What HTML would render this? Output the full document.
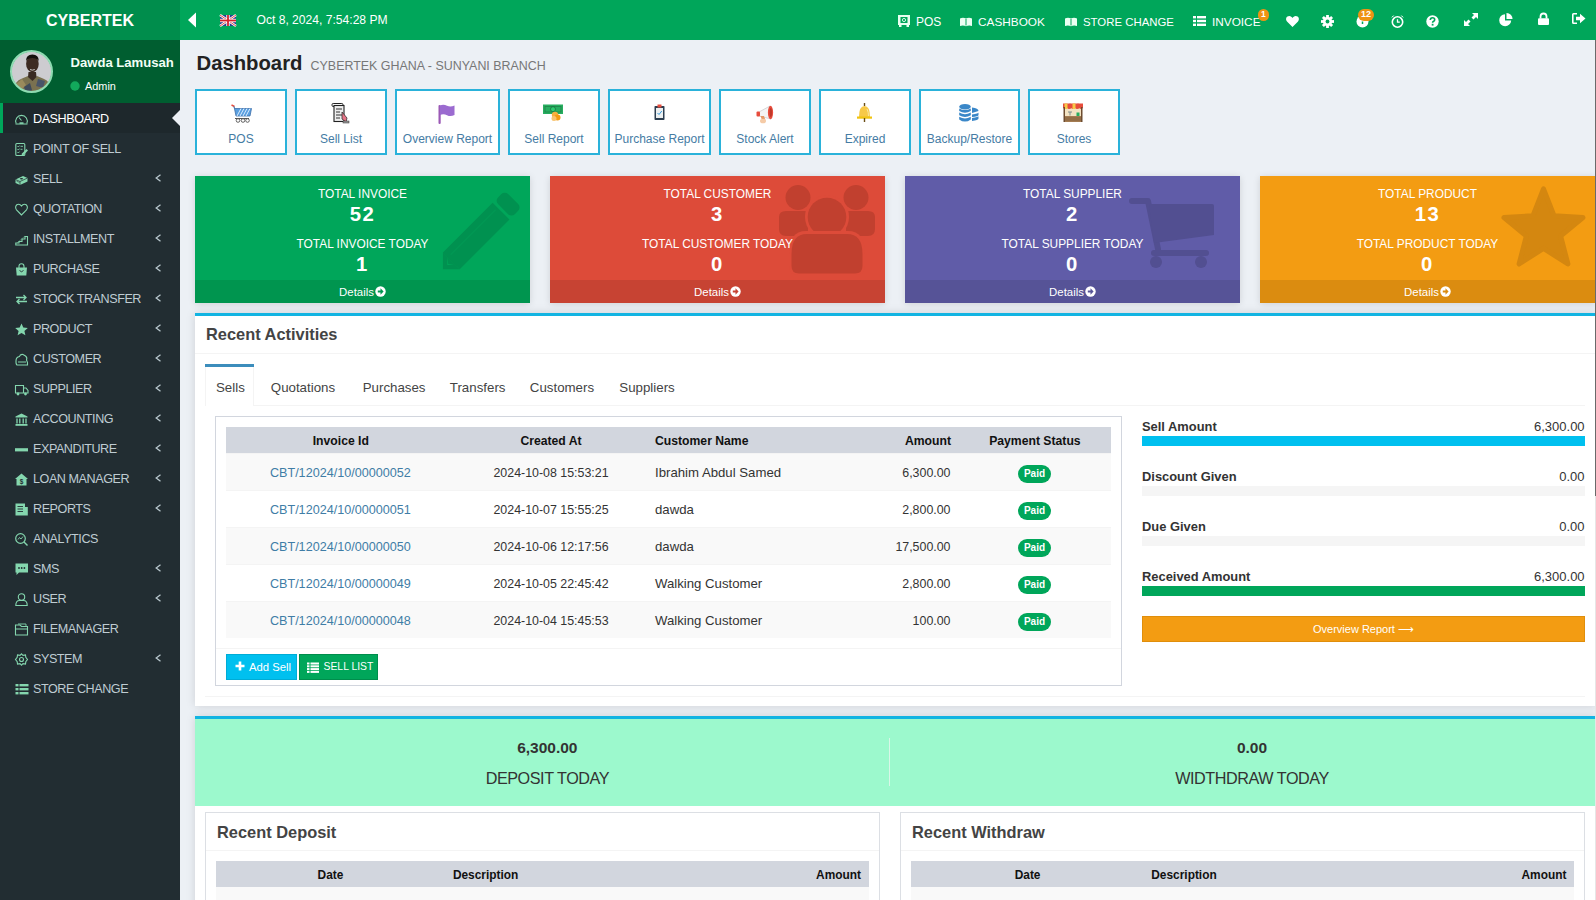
<!DOCTYPE html>
<html><head><meta charset="utf-8"><title>Dashboard</title>
<style>
html,body{margin:0;padding:0;}
body{width:1596px;height:900px;overflow:hidden;position:relative;background:#ecf0f5;font-family:"Liberation Sans", sans-serif;}
.t{position:absolute;white-space:nowrap;}
.r{position:absolute;box-sizing:border-box;}
.s{position:absolute;overflow:visible;}
</style></head><body>
<div class="r" style="left:0px;top:0px;width:1596px;height:40px;background:#00a65a;"></div>
<div class="r" style="left:0px;top:0px;width:180px;height:40px;background:#008d4c;"></div>
<div class="t" style="top:12.96px;font-size:16px;line-height:16px;color:#fff;font-weight:bold;left:-410px;width:1000px;text-align:center;">CYBERTEK</div>
<svg class="s" style="left:187px;top:12px" width="10" height="16" viewBox="0 0 10 16"><polygon points="9,0.5 1,8 9,15.5" fill="#fff"/></svg>
<svg class="s" style="left:220px;top:15px" width="16" height="11" viewBox="0 0 16 11"><rect width="16" height="11" fill="#2a3d8f"/><path d="M0 0L16 11M16 0L0 11" stroke="#fff" stroke-width="2.4"/><path d="M0 0L16 11M16 0L0 11" stroke="#d33" stroke-width="0.9"/><rect x="6.3" width="3.4" height="11" fill="#fff"/><rect y="3.8" width="16" height="3.4" fill="#fff"/><rect x="7.1" width="1.8" height="11" fill="#d4202c"/><rect y="4.6" width="16" height="1.8" fill="#d4202c"/></svg>
<div class="t" style="top:14.26px;font-size:12.1px;line-height:12.1px;color:#fff;left:256.5px;">Oct 8, 2024, 7:54:28 PM</div>
<svg class="s" style="left:898px;top:15px" width="12" height="12" viewBox="0 0 12 12"><rect x="0" y="0" width="12" height="10" fill="#e8fff0"/><rect x="2.5" y="2" width="7" height="6" fill="#00a65a"/><circle cx="6" cy="5" r="1.6" fill="none" stroke="#e8fff0" stroke-width="0.9"/><rect x="1" y="10" width="2.5" height="2" fill="#e8fff0"/><rect x="8.5" y="10" width="2.5" height="2" fill="#e8fff0"/></svg>
<div class="t" style="top:16.34px;font-size:12px;line-height:12px;color:#fff;left:916px;">POS</div>
<svg class="s" style="left:960px;top:16.5px" width="12" height="10" viewBox="0 0 12 10"><path d="M0 1.5 Q3 0 6 1.5 Q9 0 12 1.5 L12 9 Q9 7.8 6 9.2 Q3 7.8 0 9Z" fill="#eafff2"/><rect x="5.5" y="2" width="1" height="6.5" fill="#00a65a"/></svg>
<div class="t" style="top:16.51px;font-size:11.8px;line-height:11.8px;color:#fff;left:978px;">CASHBOOK</div>
<svg class="s" style="left:1065px;top:16.5px" width="12" height="10" viewBox="0 0 12 10"><path d="M0 1.5 Q3 0 6 1.5 Q9 0 12 1.5 L12 9 Q9 7.8 6 9.2 Q3 7.8 0 9Z" fill="#eafff2"/><rect x="5.5" y="2" width="1" height="6.5" fill="#00a65a"/></svg>
<div class="t" style="top:16.85px;font-size:11.4px;line-height:11.4px;color:#fff;left:1083px;">STORE CHANGE</div>
<svg class="s" style="left:1193px;top:15px" width="13" height="12" viewBox="0 0 13 12"><rect x="0" y="1" width="3" height="2.4" fill="#fff"/><rect x="4" y="1" width="9" height="2.4" fill="#fff"/><rect x="0" y="4.8" width="3" height="2.4" fill="#fff"/><rect x="4" y="4.8" width="9" height="2.4" fill="#fff"/><rect x="0" y="8.6" width="3" height="2.4" fill="#fff"/><rect x="4" y="8.6" width="9" height="2.4" fill="#fff"/></svg>
<div class="t" style="top:16.51px;font-size:11.8px;line-height:11.8px;color:#fff;left:1212px;">INVOICE</div>
<div class="r" style="left:1257.5px;top:9px;width:11.5px;height:11.5px;border-radius:6px;background:#ee9314;color:#fff;font-size:8.5px;font-weight:bold;text-align:center;line-height:11.5px;">1</div>
<svg class="s" style="left:1285.5px;top:15.5px" width="13" height="11" viewBox="0 0 13 11"><path d="M6.5 11 L1 5.5 C-1 3 0.5 0 3.3 0 C4.8 0 5.8 1 6.5 2 C7.2 1 8.2 0 9.7 0 C12.5 0 14 3 12 5.5Z" fill="#fff"/></svg>
<svg class="s" style="left:1320.5px;top:14.5px" width="13" height="13" viewBox="0 0 13 13"><g transform="translate(6.5,6.5)"><circle r="4.6" fill="#fff"/><rect x="-1.4" y="-6.5" width="2.8" height="3" fill="#fff" transform="rotate(0)"/><rect x="-1.4" y="-6.5" width="2.8" height="3" fill="#fff" transform="rotate(45)"/><rect x="-1.4" y="-6.5" width="2.8" height="3" fill="#fff" transform="rotate(90)"/><rect x="-1.4" y="-6.5" width="2.8" height="3" fill="#fff" transform="rotate(135)"/><rect x="-1.4" y="-6.5" width="2.8" height="3" fill="#fff" transform="rotate(180)"/><rect x="-1.4" y="-6.5" width="2.8" height="3" fill="#fff" transform="rotate(225)"/><rect x="-1.4" y="-6.5" width="2.8" height="3" fill="#fff" transform="rotate(270)"/><rect x="-1.4" y="-6.5" width="2.8" height="3" fill="#fff" transform="rotate(315)"/><circle r="1.9" fill="#00a65a"/></g></svg>
<svg class="s" style="left:1355.5px;top:15px" width="13" height="13" viewBox="0 0 13 13"><circle cx="6.5" cy="6.5" r="6" fill="#fff"/><path d="M6.5 6.5 L6.5 9 M6.5 6.5" stroke="#00a65a" stroke-width="1.5"/></svg>
<div class="r" style="left:1358px;top:9px;width:16px;height:11.5px;border-radius:6px;background:#ee9314;color:#fff;font-size:9px;font-weight:bold;text-align:center;line-height:11.5px;">12</div>
<svg class="s" style="left:1391px;top:14.5px" width="13" height="13" viewBox="0 0 13 13"><circle cx="6.5" cy="7" r="5.2" fill="none" stroke="#fff" stroke-width="1.6"/><path d="M6.5 4.2V7.2H8.8" stroke="#fff" stroke-width="1.3" fill="none"/><path d="M0.3 3 Q1 0 3.5 0.5Z M12.7 3 Q12 0 9.5 0.5Z" fill="#fff"/></svg>
<svg class="s" style="left:1425.5px;top:14.5px" width="13" height="13" viewBox="0 0 13 13"><circle cx="6.5" cy="6.5" r="6.2" fill="#fff"/><path d="M4.3 5 Q4.3 2.7 6.5 2.7 Q8.7 2.7 8.7 4.7 Q8.7 5.9 7.3 6.5 Q6.6 6.9 6.6 7.8" stroke="#00a65a" stroke-width="1.6" fill="none"/><rect x="5.7" y="8.8" width="1.8" height="1.8" fill="#00a65a"/></svg>
<svg class="s" style="left:1463.5px;top:12.5px" width="14" height="13" viewBox="0 0 14 13"><path d="M8 0H14V6L12 4L9.5 6.5L7.5 4.5L10 2Z M6 13H0V7L2 9L4.5 6.5L6.5 8.5L4 11Z" fill="#fff"/></svg>
<svg class="s" style="left:1499px;top:12.5px" width="14" height="13" viewBox="0 0 14 13"><path d="M6 1.2 A6 6 0 1 0 12.2 7.5 L6 7.5Z" fill="#fff"/><path d="M7.5 0 A6 6 0 0 1 13.6 6 L7.5 6Z" fill="#fff"/></svg>
<svg class="s" style="left:1537.5px;top:12.5px" width="11" height="12" viewBox="0 0 11 12"><path d="M2.5 5.5V3.5 Q2.5 0.5 5.5 0.5 Q8.5 0.5 8.5 3.5V5.5" fill="none" stroke="#fff" stroke-width="1.8"/><rect x="0" y="5.2" width="11" height="6.8" rx="1" fill="#fff"/></svg>
<svg class="s" style="left:1571.5px;top:13px" width="14" height="11" viewBox="0 0 14 11"><path d="M5 0.8H1.5 Q0.8 0.8 0.8 1.5V9.5 Q0.8 10.2 1.5 10.2H5" fill="none" stroke="#fff" stroke-width="1.6"/><path d="M4 3.8H8V0.8L13.5 5.5L8 10.2V7.2H4Z" fill="#fff"/></svg>
<div class="r" style="left:0px;top:40px;width:180px;height:860px;background:#222d32;"></div>
<div class="r" style="left:0px;top:40px;width:180px;height:63px;background:#005e30;"></div>
<svg class="s" style="left:10px;top:50px" width="43" height="43" viewBox="0 0 43 43"><defs><clipPath id="av"><circle cx="21.5" cy="21.5" r="20"/></clipPath></defs>
<g clip-path="url(#av)">
<rect x="0" y="0" width="43" height="43" fill="#cdccd0"/>
<path d="M3 43 Q4 31 12 28.5 L18 26 L22 30 L27 26 L33 28.5 Q41 31 42 43Z" fill="#7a7150"/>
<path d="M6 34 L12 29 L16 35 L10 41Z" fill="#9a8a5c"/><path d="M28 29 L35 31 L33 38 L26 36Z" fill="#485468"/>
<path d="M14 37 L20 33 L22 40 L16 43Z" fill="#3f4a5a"/><path d="M30 38 L37 36 L39 43 L31 43Z" fill="#a59060"/>
<path d="M18.5 22 L18 27 L22.5 31 L26.5 27 L26 22Z" fill="#3a2a22"/>
<ellipse cx="22.4" cy="14" rx="6.3" ry="8.3" fill="#3d2b22"/>
<path d="M16 11 Q16 4.5 22.4 4.5 Q28.8 4.5 28.8 11 Q27 8 22.4 8 Q17.8 8 16 11Z" fill="#140f0c"/>
<path d="M20 19.5 Q22.4 20.8 24.8 19.5" stroke="#eee" stroke-width="0.8" fill="none"/>
</g>
<circle cx="21.5" cy="21.5" r="20.5" fill="none" stroke="#8fdcb2" stroke-width="2"/></svg>
<div class="t" style="top:56.41px;font-size:13.1px;line-height:13.1px;color:#f2fff6;font-weight:bold;left:70.5px;">Dawda Lamusah</div>
<svg class="s" style="left:70px;top:81px" width="10" height="10" viewBox="0 0 10 10"><circle cx="5" cy="5" r="4.7" fill="#12a95b"/></svg>
<div class="t" style="top:80.87px;font-size:10.9px;line-height:10.9px;color:#fff;left:85px;">Admin</div>
<div class="r" style="left:0px;top:103px;width:180px;height:30px;background:#1e282c;"></div>
<div class="r" style="left:0px;top:103px;width:3px;height:30px;background:#00a65a;"></div>
<svg class="s" style="left:172px;top:110px" width="8" height="16" viewBox="0 0 8 16"><polygon points="8,0 0,8 8,16" fill="#ecf0f5"/></svg>
<div class="t" style="top:113.03px;font-size:12.6px;line-height:12.6px;color:#fff;letter-spacing:-0.45px;left:33px;">DASHBOARD</div>
<svg class="s" style="left:14.5px;top:113px" width="13" height="13" viewBox="0 0 13 13"><path d="M1.2 10.5 A5.8 5.8 0 1 1 11.8 10.5" fill="none" stroke="#84d6ae" stroke-width="1.1"/><path d="M6.5 7.5 L4 4.5" stroke="#84d6ae" stroke-width="1.1"/><rect x="4.5" y="9.3" width="4" height="1.6" fill="#84d6ae"/><path d="M0.5 11H12.5" stroke="#84d6ae" stroke-width="1"/></svg>
<div class="t" style="top:143.03px;font-size:12.6px;line-height:12.6px;color:#bfccd2;letter-spacing:-0.45px;left:33px;">POINT OF SELL</div>
<svg class="s" style="left:14.5px;top:143px" width="13" height="13" viewBox="0 0 13 13"><rect x="0.8" y="0.5" width="9" height="12" rx="1" fill="none" stroke="#84d6ae" stroke-width="1.1"/><path d="M2.5 3.2 L3.3 4 L4.5 2.6 M5.5 3.3H8 M2.5 6.2 L3.3 7 L4.5 5.6 M5.5 6.3H7.5 M2.5 9.2 L3.3 10 L4.5 8.6" stroke="#84d6ae" stroke-width="0.9" fill="none"/><path d="M6.5 12.5 L7 10.5 L11.5 6 L13 7.5 L8.5 12Z" fill="#84d6ae"/><path d="" stroke="#84d6ae"/></svg>
<div class="t" style="top:173.03px;font-size:12.6px;line-height:12.6px;color:#bfccd2;letter-spacing:-0.45px;left:33px;">SELL</div>
<svg class="s" style="left:14.5px;top:173px" width="13" height="13" viewBox="0 0 13 13"><path d="M0.5 6.5 L8 3 L12.5 5 L12.5 8.5 L5 12 L0.5 10Z" fill="#84d6ae"/><path d="M0.5 6.5 L5 8.5 L12.5 5 M5 8.5 V12" stroke="#222d32" stroke-width="0.7" fill="none"/><ellipse cx="6.5" cy="5.8" rx="1.6" ry="0.8" fill="#222d32"/><path d="M1.5 8 L4.5 9.5" stroke="#222d32" stroke-width="0.5"/><path d="" stroke="#84d6ae"/><path d="" fill="#84d6ae"/><path d="" fill="#84d6ae"/></svg>
<svg class="s" style="left:154.5px;top:174px" width="6.5" height="8" viewBox="0 0 6.5 8"><path d="M5.5 0.8 L1.2 4 L5.5 7.2" fill="none" stroke="#b8c7ce" stroke-width="1.3"/></svg>
<div class="t" style="top:203.03px;font-size:12.6px;line-height:12.6px;color:#bfccd2;letter-spacing:-0.45px;left:33px;">QUOTATION</div>
<svg class="s" style="left:14.5px;top:203px" width="13" height="13" viewBox="0 0 13 13"><path d="M6.5 12 L1.5 6.8 C-0.3 4.8 0.7 1.2 3.5 1.2 C5 1.2 6 2.2 6.5 3 C7 2.2 8 1.2 9.5 1.2 C12.3 1.2 13.3 4.8 11.5 6.8Z" fill="none" stroke="#84d6ae" stroke-width="1.1"/><path d="" fill="#84d6ae"/><path d="" fill="#84d6ae"/><path d="" fill="#84d6ae"/></svg>
<svg class="s" style="left:154.5px;top:204px" width="6.5" height="8" viewBox="0 0 6.5 8"><path d="M5.5 0.8 L1.2 4 L5.5 7.2" fill="none" stroke="#b8c7ce" stroke-width="1.3"/></svg>
<div class="t" style="top:233.03px;font-size:12.6px;line-height:12.6px;color:#bfccd2;letter-spacing:-0.45px;left:33px;">INSTALLMENT</div>
<svg class="s" style="left:14.5px;top:233px" width="13" height="13" viewBox="0 0 13 13"><path d="M0.8 12 H12.5 V3.5 H10 V6 H7 V8.5 H4 V10 H0.8Z" fill="none" stroke="#84d6ae" stroke-width="1.1"/><path d="M2 10 L10 3" stroke="#84d6ae" stroke-width="0.7" opacity="0.6"/><path d="" fill="#84d6ae"/><path d="" fill="#84d6ae"/></svg>
<svg class="s" style="left:154.5px;top:234px" width="6.5" height="8" viewBox="0 0 6.5 8"><path d="M5.5 0.8 L1.2 4 L5.5 7.2" fill="none" stroke="#b8c7ce" stroke-width="1.3"/></svg>
<div class="t" style="top:263.03px;font-size:12.6px;line-height:12.6px;color:#bfccd2;letter-spacing:-0.45px;left:33px;">PURCHASE</div>
<svg class="s" style="left:14.5px;top:263px" width="13" height="13" viewBox="0 0 13 13"><path d="M1 4.5 H12 L11.3 12.5 H1.7Z" fill="#84d6ae"/><path d="M4 5 V3.5 Q4 0.8 6.5 0.8 Q9 0.8 9 3.5 V5" fill="none" stroke="#84d6ae" stroke-width="1.1"/><path d="M4.5 7.5 Q6.5 10 8.5 7.5" stroke="#222d32" fill="none" stroke-width="0.9"/><path d="" fill="#84d6ae"/><path d="" fill="#84d6ae"/></svg>
<svg class="s" style="left:154.5px;top:264px" width="6.5" height="8" viewBox="0 0 6.5 8"><path d="M5.5 0.8 L1.2 4 L5.5 7.2" fill="none" stroke="#b8c7ce" stroke-width="1.3"/></svg>
<div class="t" style="top:293.03px;font-size:12.6px;line-height:12.6px;color:#bfccd2;letter-spacing:-0.45px;left:33px;">STOCK TRANSFER</div>
<svg class="s" style="left:14.5px;top:293px" width="13" height="13" viewBox="0 0 13 13"><path d="M1 4.5 H11 M8.5 2 L11 4.5 L8.5 7 M12 8.5 H2 M4.5 6 L2 8.5 L4.5 11" fill="none" stroke="#84d6ae" stroke-width="1.3"/><path d="" fill="#84d6ae"/><path d="" fill="#84d6ae"/><path d="" fill="#84d6ae"/></svg>
<svg class="s" style="left:154.5px;top:294px" width="6.5" height="8" viewBox="0 0 6.5 8"><path d="M5.5 0.8 L1.2 4 L5.5 7.2" fill="none" stroke="#b8c7ce" stroke-width="1.3"/></svg>
<div class="t" style="top:323.03px;font-size:12.6px;line-height:12.6px;color:#bfccd2;letter-spacing:-0.45px;left:33px;">PRODUCT</div>
<svg class="s" style="left:14.5px;top:323px" width="13" height="13" viewBox="0 0 13 13"><polygon points="6.5,0.5 8.3,4.6 12.8,4.9 9.4,7.9 10.4,12.3 6.5,10 2.6,12.3 3.6,7.9 0.2,4.9 4.7,4.6" fill="#84d6ae"/><path d="" fill="#84d6ae"/><path d="" fill="#84d6ae"/><path d="" fill="#84d6ae"/></svg>
<svg class="s" style="left:154.5px;top:324px" width="6.5" height="8" viewBox="0 0 6.5 8"><path d="M5.5 0.8 L1.2 4 L5.5 7.2" fill="none" stroke="#b8c7ce" stroke-width="1.3"/></svg>
<div class="t" style="top:353.03px;font-size:12.6px;line-height:12.6px;color:#bfccd2;letter-spacing:-0.45px;left:33px;">CUSTOMER</div>
<svg class="s" style="left:14.5px;top:353px" width="13" height="13" viewBox="0 0 13 13"><path d="M1 8 Q1 4 4.5 3.5 Q5 1 8 1.5 L10.5 3 Q12.5 4.5 11.5 7 L12.5 9.5 V12 H2 Q0.8 11.5 1 8Z" fill="none" stroke="#84d6ae" stroke-width="1.1"/><path d="M3 9H11" stroke="#84d6ae" stroke-width="1"/><path d="" fill="#84d6ae"/><path d="" fill="#84d6ae"/></svg>
<svg class="s" style="left:154.5px;top:354px" width="6.5" height="8" viewBox="0 0 6.5 8"><path d="M5.5 0.8 L1.2 4 L5.5 7.2" fill="none" stroke="#b8c7ce" stroke-width="1.3"/></svg>
<div class="t" style="top:383.03px;font-size:12.6px;line-height:12.6px;color:#bfccd2;letter-spacing:-0.45px;left:33px;">SUPPLIER</div>
<svg class="s" style="left:14.5px;top:383px" width="13" height="13" viewBox="0 0 13 13"><path d="M0.5 2.5 H8.5 V10 H0.5Z M8.5 5 H11 L13 7.5 V10 H8.5" fill="none" stroke="#84d6ae" stroke-width="1.1"/><circle cx="3" cy="11" r="1.4" fill="#84d6ae"/><circle cx="10.5" cy="11" r="1.4" fill="#84d6ae"/><path d="" fill="#84d6ae"/></svg>
<svg class="s" style="left:154.5px;top:384px" width="6.5" height="8" viewBox="0 0 6.5 8"><path d="M5.5 0.8 L1.2 4 L5.5 7.2" fill="none" stroke="#b8c7ce" stroke-width="1.3"/></svg>
<div class="t" style="top:413.03px;font-size:12.6px;line-height:12.6px;color:#bfccd2;letter-spacing:-0.45px;left:33px;">ACCOUNTING</div>
<svg class="s" style="left:14.5px;top:413px" width="13" height="13" viewBox="0 0 13 13"><path d="M6.5 0.5 L12.5 3.5 V4.5 H0.5 V3.5Z" fill="#84d6ae"/><path d="M2 5.5V10.5M4.8 5.5V10.5M8.2 5.5V10.5M11 5.5V10.5" stroke="#84d6ae" stroke-width="1.3"/><rect x="0.5" y="11" width="12" height="1.8" fill="#84d6ae"/><path d="" fill="#84d6ae"/></svg>
<svg class="s" style="left:154.5px;top:414px" width="6.5" height="8" viewBox="0 0 6.5 8"><path d="M5.5 0.8 L1.2 4 L5.5 7.2" fill="none" stroke="#b8c7ce" stroke-width="1.3"/></svg>
<div class="t" style="top:443.03px;font-size:12.6px;line-height:12.6px;color:#bfccd2;letter-spacing:-0.45px;left:33px;">EXPANDITURE</div>
<svg class="s" style="left:14.5px;top:443px" width="13" height="13" viewBox="0 0 13 13"><rect x="0" y="5.2" width="13" height="3.2" fill="#84d6ae"/><path d="" fill="#84d6ae"/><path d="" fill="#84d6ae"/><path d="" fill="#84d6ae"/></svg>
<svg class="s" style="left:154.5px;top:444px" width="6.5" height="8" viewBox="0 0 6.5 8"><path d="M5.5 0.8 L1.2 4 L5.5 7.2" fill="none" stroke="#b8c7ce" stroke-width="1.3"/></svg>
<div class="t" style="top:473.03px;font-size:12.6px;line-height:12.6px;color:#bfccd2;letter-spacing:-0.45px;left:33px;">LOAN MANAGER</div>
<svg class="s" style="left:14.5px;top:473px" width="13" height="13" viewBox="0 0 13 13"><path d="M6.5 0.5 L13 6 H11.5 V12.5 H1.5 V6 H0Z" fill="#84d6ae"/><text x="6.5" y="10.5" font-size="6.5" font-weight="bold" text-anchor="middle" fill="#222d32" font-family="Liberation Sans">$</text><path d="" fill="#84d6ae"/><path d="" fill="#84d6ae"/><path d="" fill="#84d6ae"/></svg>
<svg class="s" style="left:154.5px;top:474px" width="6.5" height="8" viewBox="0 0 6.5 8"><path d="M5.5 0.8 L1.2 4 L5.5 7.2" fill="none" stroke="#b8c7ce" stroke-width="1.3"/></svg>
<div class="t" style="top:503.03px;font-size:12.6px;line-height:12.6px;color:#bfccd2;letter-spacing:-0.45px;left:33px;">REPORTS</div>
<svg class="s" style="left:14.5px;top:503px" width="13" height="13" viewBox="0 0 13 13"><rect x="0.5" y="0.5" width="9.5" height="12" fill="#84d6ae"/><rect x="10" y="4" width="2.8" height="8.5" fill="#84d6ae"/><path d="M2.5 3.5H8M2.5 6H8M2.5 8.5H8" stroke="#222d32" stroke-width="0.9"/><path d="" fill="#84d6ae"/><path d="" fill="#84d6ae"/></svg>
<svg class="s" style="left:154.5px;top:504px" width="6.5" height="8" viewBox="0 0 6.5 8"><path d="M5.5 0.8 L1.2 4 L5.5 7.2" fill="none" stroke="#b8c7ce" stroke-width="1.3"/></svg>
<div class="t" style="top:533.03px;font-size:12.6px;line-height:12.6px;color:#bfccd2;letter-spacing:-0.45px;left:33px;">ANALYTICS</div>
<svg class="s" style="left:14.5px;top:533px" width="13" height="13" viewBox="0 0 13 13"><circle cx="5.5" cy="5.5" r="4.8" fill="none" stroke="#84d6ae" stroke-width="1.2"/><path d="M9 9 L12.5 12.5" stroke="#84d6ae" stroke-width="1.4"/><path d="M3 6.5 L4.5 4.5 L6 6 L8 3.5" stroke="#84d6ae" fill="none" stroke-width="0.9"/><path d="" fill="#84d6ae"/></svg>
<div class="t" style="top:563.03px;font-size:12.6px;line-height:12.6px;color:#bfccd2;letter-spacing:-0.45px;left:33px;">SMS</div>
<svg class="s" style="left:14.5px;top:563px" width="13" height="13" viewBox="0 0 13 13"><path d="M0.5 0.5 H13 V9.5 H4 L1.5 12 V9.5 H0.5Z" fill="#84d6ae"/><circle cx="4" cy="5" r="0.9" fill="#222d32"/><circle cx="6.7" cy="5" r="0.9" fill="#222d32"/><circle cx="9.4" cy="5" r="0.9" fill="#222d32"/><path d="" fill="#84d6ae"/><path d="" fill="#84d6ae"/><path d="" fill="#84d6ae"/></svg>
<svg class="s" style="left:154.5px;top:564px" width="6.5" height="8" viewBox="0 0 6.5 8"><path d="M5.5 0.8 L1.2 4 L5.5 7.2" fill="none" stroke="#b8c7ce" stroke-width="1.3"/></svg>
<div class="t" style="top:593.03px;font-size:12.6px;line-height:12.6px;color:#bfccd2;letter-spacing:-0.45px;left:33px;">USER</div>
<svg class="s" style="left:14.5px;top:593px" width="13" height="13" viewBox="0 0 13 13"><circle cx="6.5" cy="4" r="3.2" fill="none" stroke="#84d6ae" stroke-width="1.1"/><path d="M0.8 12.5 Q0.8 7.5 4.5 7.5 H8.5 Q12.2 7.5 12.2 12.5Z" fill="none" stroke="#84d6ae" stroke-width="1.1"/><path d="" fill="#84d6ae"/><path d="" fill="#84d6ae"/></svg>
<svg class="s" style="left:154.5px;top:594px" width="6.5" height="8" viewBox="0 0 6.5 8"><path d="M5.5 0.8 L1.2 4 L5.5 7.2" fill="none" stroke="#b8c7ce" stroke-width="1.3"/></svg>
<div class="t" style="top:623.03px;font-size:12.6px;line-height:12.6px;color:#bfccd2;letter-spacing:-0.45px;left:33px;">FILEMANAGER</div>
<svg class="s" style="left:14.5px;top:623px" width="13" height="13" viewBox="0 0 13 13"><path d="M0.5 2 H5 L6.5 3.5 H12.5 V12 H0.5Z" fill="none" stroke="#84d6ae" stroke-width="1.1"/><path d="M0.5 6 H12.5" stroke="#84d6ae" stroke-width="1"/><path d="M3 1 H11 V3" stroke="#84d6ae" fill="none" stroke-width="0.9"/><path d="" fill="#84d6ae"/></svg>
<div class="t" style="top:653.03px;font-size:12.6px;line-height:12.6px;color:#bfccd2;letter-spacing:-0.45px;left:33px;">SYSTEM</div>
<svg class="s" style="left:14.5px;top:653px" width="13" height="13" viewBox="0 0 13 13"><circle cx="6.5" cy="6.5" r="2" fill="none" stroke="#84d6ae" stroke-width="1.1"/><path d="M6.5 0.8 L8 2.3 L10.5 1.9 L10.8 4.3 L12.5 6.5 L10.8 8.7 L10.5 11.1 L8 10.7 L6.5 12.2 L5 10.7 L2.5 11.1 L2.2 8.7 L0.5 6.5 L2.2 4.3 L2.5 1.9 L5 2.3Z" fill="none" stroke="#84d6ae" stroke-width="1.1"/><path d="" fill="#84d6ae"/><path d="" fill="#84d6ae"/></svg>
<svg class="s" style="left:154.5px;top:654px" width="6.5" height="8" viewBox="0 0 6.5 8"><path d="M5.5 0.8 L1.2 4 L5.5 7.2" fill="none" stroke="#b8c7ce" stroke-width="1.3"/></svg>
<div class="t" style="top:683.03px;font-size:12.6px;line-height:12.6px;color:#bfccd2;letter-spacing:-0.45px;left:33px;">STORE CHANGE</div>
<svg class="s" style="left:14.5px;top:683px" width="13" height="13" viewBox="0 0 13 13"><rect x="0.5" y="1" width="3" height="2.4" fill="#84d6ae"/><rect x="4.5" y="1" width="9" height="2.4" fill="#84d6ae"/><rect x="0.5" y="5" width="3" height="2.4" fill="#84d6ae"/><rect x="4.5" y="5" width="9" height="2.4" fill="#84d6ae"/><rect x="0.5" y="9" width="3" height="2.4" fill="#84d6ae"/><rect x="4.5" y="9" width="9" height="2.4" fill="#84d6ae"/></svg>
<div class="t" style="top:53.32px;font-size:20.3px;line-height:20.3px;color:#222;font-weight:bold;left:196.5px;">Dashboard</div>
<div class="t" style="top:59.96px;font-size:12.45px;line-height:12.45px;color:#777;left:310.6px;">CYBERTEK GHANA - SUNYANI BRANCH</div>
<div class="r" style="left:195px;top:89px;width:92px;height:66px;background:#fff;border:2px solid #2ab2da;"></div>
<div class="t" style="top:132.94px;font-size:12px;line-height:12px;color:#457ca4;left:-259.0px;width:1000px;text-align:center;">POS</div>
<div class="r" style="left:295px;top:89px;width:92px;height:66px;background:#fff;border:2px solid #2ab2da;"></div>
<div class="t" style="top:132.94px;font-size:12px;line-height:12px;color:#457ca4;left:-159.0px;width:1000px;text-align:center;">Sell List</div>
<div class="r" style="left:395px;top:89px;width:105px;height:66px;background:#fff;border:2px solid #2ab2da;"></div>
<div class="t" style="top:132.94px;font-size:12px;line-height:12px;color:#457ca4;left:-52.5px;width:1000px;text-align:center;">Overview Report</div>
<div class="r" style="left:508px;top:89px;width:92px;height:66px;background:#fff;border:2px solid #2ab2da;"></div>
<div class="t" style="top:132.94px;font-size:12px;line-height:12px;color:#457ca4;left:54.0px;width:1000px;text-align:center;">Sell Report</div>
<div class="r" style="left:608px;top:89px;width:103px;height:66px;background:#fff;border:2px solid #2ab2da;"></div>
<div class="t" style="top:132.94px;font-size:12px;line-height:12px;color:#457ca4;left:159.5px;width:1000px;text-align:center;">Purchase Report</div>
<div class="r" style="left:719px;top:89px;width:92px;height:66px;background:#fff;border:2px solid #2ab2da;"></div>
<div class="t" style="top:132.94px;font-size:12px;line-height:12px;color:#457ca4;left:265.0px;width:1000px;text-align:center;">Stock Alert</div>
<div class="r" style="left:819px;top:89px;width:92px;height:66px;background:#fff;border:2px solid #2ab2da;"></div>
<div class="t" style="top:132.94px;font-size:12px;line-height:12px;color:#457ca4;left:365.0px;width:1000px;text-align:center;">Expired</div>
<div class="r" style="left:919px;top:89px;width:101px;height:66px;background:#fff;border:2px solid #2ab2da;"></div>
<div class="t" style="top:132.94px;font-size:12px;line-height:12px;color:#457ca4;left:469.5px;width:1000px;text-align:center;">Backup/Restore</div>
<div class="r" style="left:1028px;top:89px;width:92px;height:66px;background:#fff;border:2px solid #2ab2da;"></div>
<div class="t" style="top:132.94px;font-size:12px;line-height:12px;color:#457ca4;left:574.0px;width:1000px;text-align:center;">Stores</div>
<svg class="s" style="left:230.5px;top:104px" width="21" height="19" viewBox="0 0 21 19"><path d="M0.5 1 L3.5 2.5" stroke="#e74c3c" stroke-width="1.5"/><path d="M3 2.5 L5 12 H19 L20.5 4.5 H3.5Z" fill="#5a9fe0" stroke="#3d6fa8" stroke-width="0.8"/><path d="M6 12 L10 4.5 M9 12 L13 4.5 M12 12 L16 4.5 M15 12 L19 4.5" stroke="#d9ecff" stroke-width="1"/><path d="M4 14.5H18" stroke="#555" stroke-width="1"/><circle cx="7" cy="16.5" r="1.8" fill="#fff" stroke="#555" stroke-width="0.9"/><circle cx="12" cy="16.5" r="1.8" fill="#fff" stroke="#555" stroke-width="0.9"/><circle cx="16.5" cy="16.5" r="1.8" fill="#fff" stroke="#555" stroke-width="0.9"/></svg>
<svg class="s" style="left:331px;top:103px" width="20" height="21" viewBox="0 0 20 21"><rect x="1" y="0.5" width="11" height="3" rx="1.2" fill="#fff" stroke="#222" stroke-width="1"/><rect x="3" y="2.5" width="10" height="16" fill="#eee" stroke="#222" stroke-width="1.1"/><path d="M5 6H11M5 9H9M5 12H11M5 15H9" stroke="#333" stroke-width="1"/><path d="M11 9 L16 15 L15 19 L11 16Z" fill="#e57386" stroke="#333" stroke-width="0.8"/><rect x="12" y="18" width="6" height="2" fill="#999" stroke="#333" stroke-width="0.5"/></svg>
<svg class="s" style="left:438px;top:103.5px" width="17" height="20" viewBox="0 0 17 20"><rect x="0.5" y="1" width="2.2" height="19" rx="1" fill="#9b59b6"/><path d="M2 1.5 Q5.5 0 9 1.8 Q12.5 3.5 16.5 1.5 V11 Q12.5 13 9 11.2 Q5.5 9.5 2 11Z" fill="#9b6bd0"/></svg>
<svg class="s" style="left:543px;top:104px" width="21" height="18" viewBox="0 0 21 18"><rect x="0" y="0.5" width="20" height="9.5" fill="#27ae60"/><rect x="2" y="2.5" width="16" height="5.5" fill="none" stroke="#1e8449" stroke-width="0.8"/><circle cx="10" cy="5.2" r="2.5" fill="#2ecc71" stroke="#145a32" stroke-width="0.6"/><circle cx="12" cy="11" r="3.2" fill="#f5b041"/><circle cx="14.5" cy="13.5" r="3" fill="#f39c12"/><circle cx="11" cy="14.5" r="2.5" fill="#f8c471"/></svg>
<svg class="s" style="left:654px;top:104px" width="11" height="17" viewBox="0 0 11 17"><rect x="0.5" y="2" width="10" height="14" rx="0.8" fill="#2c3e50"/><rect x="2" y="4" width="7" height="10" fill="#ecf0f1"/><rect x="3.5" y="0.5" width="4" height="3" fill="#e74c3c"/><path d="M3.5 9 L5 10.5 L7.8 7" stroke="#3498db" stroke-width="1" fill="none"/></svg>
<svg class="s" style="left:756px;top:104px" width="19" height="20" viewBox="0 0 19 20"><path d="M3 8 L14 2 L15 15 L3 12Z" fill="#f4f4f4" stroke="#c8c8c8" stroke-width="0.7"/><ellipse cx="14.5" cy="8.5" rx="2.6" ry="6.8" fill="#e74c3c"/><ellipse cx="14.8" cy="8.5" rx="1.2" ry="4.5" fill="#c0392b"/><rect x="0.5" y="7.5" width="3.5" height="5" rx="1" fill="#e74c3c"/><path d="M4.5 12 L6.5 17.5 L9.5 16.5 L8 12Z" fill="#e59866"/><ellipse cx="7" cy="17" rx="3" ry="2.3" fill="#f5cba7"/></svg>
<svg class="s" style="left:856px;top:103px" width="17" height="20" viewBox="0 0 17 20"><rect x="7.8" y="0" width="1.4" height="3" fill="#6b4e16"/><path d="M3 14 Q3 3 8.5 3 Q14 3 14 14Z" fill="#f7c948"/><rect x="1" y="13.5" width="15" height="2.2" fill="#f1c40f"/><rect x="7.8" y="15" width="1.4" height="4" fill="#6b4e16"/><path d="M11 6 Q12.5 9 12.5 13" stroke="#f9e79f" stroke-width="1" fill="none"/></svg>
<svg class="s" style="left:959px;top:104px" width="20" height="20" viewBox="0 0 20 20"><ellipse cx="6" cy="2.8" rx="5.8" ry="2.8" fill="#3a87c8"/><path d="M0.2 4.4 Q6 7.8 11.8 4.4 V7 Q6 10.4 0.2 7Z" fill="#3a87c8"/><path d="M0.2 8.6 Q6 12 11.8 8.6 V11.2 Q6 14.6 0.2 11.2Z" fill="#3a87c8"/><path d="M0.2 12.8 Q6 16.2 11.8 12.8 V15.4 Q6 19.8 0.2 15.4Z" fill="#3a87c8"/><path d="M13 3.5 Q19.5 4 19.5 7 L13 9Z M13 10.5 Q19.5 9.5 19.5 8.5 V11 Q19.5 12.5 13 13Z M13 14 Q19.5 13 19.5 12.3 V14.5 Q19.5 16 13 17Z" fill="#3a87c8"/></svg>
<svg class="s" style="left:1063px;top:103px" width="20" height="20" viewBox="0 0 20 20"><rect x="1.5" y="4" width="17" height="15" fill="#f3e3c3"/><rect x="1.5" y="13" width="17" height="6" fill="#a47c52"/><path d="M1.5 15H18.5M1.5 17H18.5" stroke="#7a5634" stroke-width="0.7"/><path d="M0 0.5 H20 V5 Q18 7 16 5 Q14 7 12 5 Q10 7 8 5 Q6 7 4 5 Q2 7 0 5Z" fill="#e74c3c"/><path d="M3 0.5V6 M11 0.5V6" stroke="#f7c948" stroke-width="3"/><path d="M7 0.5V6 M15 0.5V6" stroke="#e74c3c" stroke-width="1"/><rect x="13.5" y="9.5" width="3" height="3.5" fill="#27ae60"/><path d="M5 9 H9 M7 9 V12.5" stroke="#7f8c8d" stroke-width="1"/><rect x="0.5" y="4" width="1.5" height="15" fill="#6d4c30"/><rect x="18" y="4" width="1.5" height="15" fill="#6d4c30"/></svg>
<div class="r" style="left:195px;top:176px;width:335px;height:127px;background:#00a65a;box-shadow:0 1px 7px rgba(0,0,0,0.13);"></div>
<svg class="s" style="left:425px;top:176px" width="110" height="110" viewBox="0 0 110 110"><g transform="translate(53.2,58) rotate(45) scale(0.95)"><rect x="-12.5" y="-52" width="25" height="15" rx="5" fill="#009150"/><rect x="-12.5" y="-34" width="25" height="74" fill="#009150"/><path d="M-12.5 40 H12.5 L0 52.5Z" fill="#009150"/><path d="M-5 -31 V36" stroke="#00a65a" stroke-width="1.6" opacity="0.35"/><path d="M-6 40 L0 46 L5 41 L0 44.5Z" fill="#00a65a"/></g></svg>
<div class="r" style="left:195px;top:280px;width:335px;height:23px;background:#00954f;"></div>
<div class="t" style="top:189.23px;font-size:11.9px;line-height:11.9px;color:#fff;left:-137.5px;width:1000px;text-align:center;">TOTAL INVOICE</div>
<div class="t" style="top:203.92px;font-size:20.3px;line-height:20.3px;color:#fff;font-weight:bold;letter-spacing:1.5px;left:-137.5px;width:1000px;text-align:center;">52</div>
<div class="t" style="top:239.23px;font-size:11.9px;line-height:11.9px;color:#fff;left:-137.5px;width:1000px;text-align:center;">TOTAL INVOICE TODAY</div>
<div class="t" style="top:253.82px;font-size:20.3px;line-height:20.3px;color:#fff;font-weight:bold;letter-spacing:1.5px;left:-137.5px;width:1000px;text-align:center;">1</div>
<div class="t" style="top:286.85px;font-size:11.4px;line-height:11.4px;color:#fff;left:-143.5px;width:1000px;text-align:center;">Details</div>
<svg class="s" style="left:374.5px;top:286px" width="11" height="11" viewBox="0 0 11 11"><circle cx="5.5" cy="5.5" r="5.2" fill="#fff"/><path d="M2.8 4.5 H5.5 V2.3 L8.6 5.5 L5.5 8.7 V6.5 H2.8Z" fill="#00954f"/></svg>
<div class="r" style="left:550px;top:176px;width:335px;height:127px;background:#dd4b39;box-shadow:0 1px 7px rgba(0,0,0,0.13);"></div>
<svg class="s" style="left:778px;top:184px" width="98" height="92" viewBox="0 0 98 92"><circle cx="20" cy="13.5" r="12.5" fill="#c1402f"/><circle cx="78" cy="13.5" r="12.5" fill="#c1402f"/>
<path d="M1 33 Q1 27 8 27 H26 Q30 27 30 31 V52 H8 Q1 52 1 45Z" fill="#c1402f"/><path d="M68 27 H90 Q97 27 97 33 V45 Q97 52 90 52 H68 V31 Q68 27 72 27Z" fill="#c1402f"/>
<circle cx="49" cy="33" r="22" fill="#dd4b39"/><circle cx="49" cy="33" r="19.3" fill="#c1402f"/>
<path d="M11 70 Q11 47 28 47 H70 Q87 47 87 70 V82 Q87 91 78 91 H20 Q11 91 11 82Z" fill="#dd4b39"/><path d="M13.5 70 Q13.5 50 29 50 H69 Q84.5 50 84.5 70 V82 Q84.5 89.5 77 89.5 H21 Q13.5 89.5 13.5 82Z" fill="#c1402f"/></svg>
<div class="r" style="left:550px;top:280px;width:335px;height:23px;background:#c74333;"></div>
<div class="t" style="top:189.23px;font-size:11.9px;line-height:11.9px;color:#fff;left:217.5px;width:1000px;text-align:center;">TOTAL CUSTOMER</div>
<div class="t" style="top:203.92px;font-size:20.3px;line-height:20.3px;color:#fff;font-weight:bold;letter-spacing:1.5px;left:217.5px;width:1000px;text-align:center;">3</div>
<div class="t" style="top:239.23px;font-size:11.9px;line-height:11.9px;color:#fff;left:217.5px;width:1000px;text-align:center;">TOTAL CUSTOMER TODAY</div>
<div class="t" style="top:253.82px;font-size:20.3px;line-height:20.3px;color:#fff;font-weight:bold;letter-spacing:1.5px;left:217.5px;width:1000px;text-align:center;">0</div>
<div class="t" style="top:286.85px;font-size:11.4px;line-height:11.4px;color:#fff;left:211.5px;width:1000px;text-align:center;">Details</div>
<svg class="s" style="left:729.5px;top:286px" width="11" height="11" viewBox="0 0 11 11"><circle cx="5.5" cy="5.5" r="5.2" fill="#fff"/><path d="M2.8 4.5 H5.5 V2.3 L8.6 5.5 L5.5 8.7 V6.5 H2.8Z" fill="#c74333"/></svg>
<div class="r" style="left:905px;top:176px;width:335px;height:127px;background:#605ca8;box-shadow:0 1px 7px rgba(0,0,0,0.13);"></div>
<svg class="s" style="left:1130px;top:197px" width="86" height="72" viewBox="0 0 86 72"><path d="M2 4 H18 L28 52" fill="none" stroke="#524f91" stroke-width="6" stroke-linecap="round" stroke-linejoin="round"/><path d="M19 7 H82 Q84 7 84 9 V38 L24 46Z" fill="#524f91"/><path d="M24 56 H76" stroke="#524f91" stroke-width="6" stroke-linecap="round"/><circle cx="26" cy="65" r="6" fill="#524f91"/><circle cx="71" cy="65" r="6" fill="#524f91"/></svg>
<div class="r" style="left:905px;top:280px;width:335px;height:23px;background:#565397;"></div>
<div class="t" style="top:189.23px;font-size:11.9px;line-height:11.9px;color:#fff;left:572.5px;width:1000px;text-align:center;">TOTAL SUPPLIER</div>
<div class="t" style="top:203.92px;font-size:20.3px;line-height:20.3px;color:#fff;font-weight:bold;letter-spacing:1.5px;left:572.5px;width:1000px;text-align:center;">2</div>
<div class="t" style="top:239.23px;font-size:11.9px;line-height:11.9px;color:#fff;left:572.5px;width:1000px;text-align:center;">TOTAL SUPPLIER TODAY</div>
<div class="t" style="top:253.82px;font-size:20.3px;line-height:20.3px;color:#fff;font-weight:bold;letter-spacing:1.5px;left:572.5px;width:1000px;text-align:center;">0</div>
<div class="t" style="top:286.85px;font-size:11.4px;line-height:11.4px;color:#fff;left:566.5px;width:1000px;text-align:center;">Details</div>
<svg class="s" style="left:1084.5px;top:286px" width="11" height="11" viewBox="0 0 11 11"><circle cx="5.5" cy="5.5" r="5.2" fill="#fff"/><path d="M2.8 4.5 H5.5 V2.3 L8.6 5.5 L5.5 8.7 V6.5 H2.8Z" fill="#565397"/></svg>
<div class="r" style="left:1260px;top:176px;width:336px;height:127px;background:#f39c12;box-shadow:0 1px 7px rgba(0,0,0,0.13);"></div>
<svg class="s" style="left:1498px;top:184px" width="92" height="92" viewBox="0 0 92 92"><polygon points="45.5,4.9 56.1,31.8 85.0,33.6 62.6,52.0 69.9,80.0 45.5,64.4 21.1,80.0 28.4,52.0 6.0,33.6 34.9,31.8" fill="#d48710" stroke="#d48710" stroke-width="5" stroke-linejoin="round"/></svg>
<div class="r" style="left:1260px;top:280px;width:336px;height:23px;background:#db8c10;"></div>
<div class="t" style="top:189.23px;font-size:11.9px;line-height:11.9px;color:#fff;left:927.5px;width:1000px;text-align:center;">TOTAL PRODUCT</div>
<div class="t" style="top:203.92px;font-size:20.3px;line-height:20.3px;color:#fff;font-weight:bold;letter-spacing:1.5px;left:927.5px;width:1000px;text-align:center;">13</div>
<div class="t" style="top:239.23px;font-size:11.9px;line-height:11.9px;color:#fff;left:927.5px;width:1000px;text-align:center;">TOTAL PRODUCT TODAY</div>
<div class="t" style="top:253.82px;font-size:20.3px;line-height:20.3px;color:#fff;font-weight:bold;letter-spacing:1.5px;left:927.5px;width:1000px;text-align:center;">0</div>
<div class="t" style="top:286.85px;font-size:11.4px;line-height:11.4px;color:#fff;left:921.5px;width:1000px;text-align:center;">Details</div>
<svg class="s" style="left:1439.5px;top:286px" width="11" height="11" viewBox="0 0 11 11"><circle cx="5.5" cy="5.5" r="5.2" fill="#fff"/><path d="M2.8 4.5 H5.5 V2.3 L8.6 5.5 L5.5 8.7 V6.5 H2.8Z" fill="#db8c10"/></svg>
<div class="r" style="left:195px;top:313px;width:1401px;height:393px;background:#fff;border-top:3px solid #12b4e2;box-shadow:0 0 9px rgba(0,0,0,0.13);"></div>
<div class="t" style="top:326.32px;font-size:16.4px;line-height:16.4px;color:#444;font-weight:bold;left:206px;">Recent Activities</div>
<div class="r" style="left:195px;top:353px;width:1401px;height:1px;background:#f4f4f4;"></div>
<div class="r" style="left:205px;top:405px;width:1380px;height:1px;background:#f4f4f4;"></div>
<div class="r" style="left:205px;top:364px;width:49px;height:42px;background:#fff;"></div>
<div class="r" style="left:205px;top:367px;width:1px;height:39px;background:#f4f4f4;"></div>
<div class="r" style="left:253px;top:367px;width:1px;height:39px;background:#f4f4f4;"></div>
<div class="r" style="left:205px;top:364px;width:49px;height:3px;background:#3c8dbc;"></div>
<div class="t" style="top:381.04px;font-size:13.3px;line-height:13.3px;color:#444;left:216px;">Sells</div>
<div class="t" style="top:381.04px;font-size:13.3px;line-height:13.3px;color:#444;left:270.8px;">Quotations</div>
<div class="t" style="top:381.04px;font-size:13.3px;line-height:13.3px;color:#444;left:362.7px;">Purchases</div>
<div class="t" style="top:381.04px;font-size:13.3px;line-height:13.3px;color:#444;left:449.8px;">Transfers</div>
<div class="t" style="top:381.04px;font-size:13.3px;line-height:13.3px;color:#444;left:529.8px;">Customers</div>
<div class="t" style="top:381.04px;font-size:13.3px;line-height:13.3px;color:#444;left:619.3px;">Suppliers</div>
<div class="r" style="left:205px;top:696px;width:1380px;height:1px;background:#f4f4f4;"></div>
<div class="r" style="left:215px;top:416px;width:907px;height:270px;background:#fff;border:1px solid #d2d6de;"></div>
<div class="r" style="left:226px;top:427px;width:885px;height:26px;background:#d2d6de;"></div>
<div class="t" style="top:434.97px;font-size:12.2px;line-height:12.2px;color:#111;font-weight:bold;left:-159.2px;width:1000px;text-align:center;">Invoice Id</div>
<div class="t" style="top:434.97px;font-size:12.2px;line-height:12.2px;color:#111;font-weight:bold;left:51px;width:1000px;text-align:center;">Created At</div>
<div class="t" style="top:434.97px;font-size:12.2px;line-height:12.2px;color:#111;font-weight:bold;left:655px;">Customer Name</div>
<div class="t" style="top:434.97px;font-size:12.2px;line-height:12.2px;color:#111;font-weight:bold;left:-49px;width:1000px;text-align:right;">Amount</div>
<div class="t" style="top:434.97px;font-size:12.2px;line-height:12.2px;color:#111;font-weight:bold;left:534.9000000000001px;width:1000px;text-align:center;">Payment Status</div>
<div class="r" style="left:226px;top:453px;width:885px;height:37px;background:#f9f9f9;"></div>
<div class="r" style="left:226px;top:453px;width:885px;height:1px;background:#f4f4f4;"></div>
<div class="t" style="top:466.83px;font-size:12.6px;line-height:12.6px;color:#3f7da6;left:-159.7px;width:1000px;text-align:center;">CBT/12024/10/00000052</div>
<div class="t" style="top:467.00px;font-size:12.4px;line-height:12.4px;color:#333;left:51px;width:1000px;text-align:center;">2024-10-08 15:53:21</div>
<div class="t" style="top:466.33px;font-size:13.2px;line-height:13.2px;color:#333;left:655px;">Ibrahim Abdul Samed</div>
<div class="t" style="top:467.00px;font-size:12.4px;line-height:12.4px;color:#333;left:-49.5px;width:1000px;text-align:right;">6,300.00</div>
<div class="r" style="left:1018px;top:465px;width:33px;height:18px;border-radius:9px;background:#00a65a;color:#fff;font-size:10px;font-weight:bold;text-align:center;line-height:18px;">Paid</div>
<div class="r" style="left:226px;top:490px;width:885px;height:37px;background:#fff;"></div>
<div class="r" style="left:226px;top:490px;width:885px;height:1px;background:#f4f4f4;"></div>
<div class="t" style="top:503.83px;font-size:12.6px;line-height:12.6px;color:#3f7da6;left:-159.7px;width:1000px;text-align:center;">CBT/12024/10/00000051</div>
<div class="t" style="top:504.00px;font-size:12.4px;line-height:12.4px;color:#333;left:51px;width:1000px;text-align:center;">2024-10-07 15:55:25</div>
<div class="t" style="top:503.33px;font-size:13.2px;line-height:13.2px;color:#333;left:655px;">dawda</div>
<div class="t" style="top:504.00px;font-size:12.4px;line-height:12.4px;color:#333;left:-49.5px;width:1000px;text-align:right;">2,800.00</div>
<div class="r" style="left:1018px;top:502px;width:33px;height:18px;border-radius:9px;background:#00a65a;color:#fff;font-size:10px;font-weight:bold;text-align:center;line-height:18px;">Paid</div>
<div class="r" style="left:226px;top:527px;width:885px;height:37px;background:#f9f9f9;"></div>
<div class="r" style="left:226px;top:527px;width:885px;height:1px;background:#f4f4f4;"></div>
<div class="t" style="top:540.83px;font-size:12.6px;line-height:12.6px;color:#3f7da6;left:-159.7px;width:1000px;text-align:center;">CBT/12024/10/00000050</div>
<div class="t" style="top:541.00px;font-size:12.4px;line-height:12.4px;color:#333;left:51px;width:1000px;text-align:center;">2024-10-06 12:17:56</div>
<div class="t" style="top:540.33px;font-size:13.2px;line-height:13.2px;color:#333;left:655px;">dawda</div>
<div class="t" style="top:541.00px;font-size:12.4px;line-height:12.4px;color:#333;left:-49.5px;width:1000px;text-align:right;">17,500.00</div>
<div class="r" style="left:1018px;top:539px;width:33px;height:18px;border-radius:9px;background:#00a65a;color:#fff;font-size:10px;font-weight:bold;text-align:center;line-height:18px;">Paid</div>
<div class="r" style="left:226px;top:564px;width:885px;height:37px;background:#fff;"></div>
<div class="r" style="left:226px;top:564px;width:885px;height:1px;background:#f4f4f4;"></div>
<div class="t" style="top:577.83px;font-size:12.6px;line-height:12.6px;color:#3f7da6;left:-159.7px;width:1000px;text-align:center;">CBT/12024/10/00000049</div>
<div class="t" style="top:578.00px;font-size:12.4px;line-height:12.4px;color:#333;left:51px;width:1000px;text-align:center;">2024-10-05 22:45:42</div>
<div class="t" style="top:577.33px;font-size:13.2px;line-height:13.2px;color:#333;left:655px;">Walking Customer</div>
<div class="t" style="top:578.00px;font-size:12.4px;line-height:12.4px;color:#333;left:-49.5px;width:1000px;text-align:right;">2,800.00</div>
<div class="r" style="left:1018px;top:576px;width:33px;height:18px;border-radius:9px;background:#00a65a;color:#fff;font-size:10px;font-weight:bold;text-align:center;line-height:18px;">Paid</div>
<div class="r" style="left:226px;top:601px;width:885px;height:37px;background:#f9f9f9;"></div>
<div class="r" style="left:226px;top:601px;width:885px;height:1px;background:#f4f4f4;"></div>
<div class="t" style="top:614.83px;font-size:12.6px;line-height:12.6px;color:#3f7da6;left:-159.7px;width:1000px;text-align:center;">CBT/12024/10/00000048</div>
<div class="t" style="top:615.00px;font-size:12.4px;line-height:12.4px;color:#333;left:51px;width:1000px;text-align:center;">2024-10-04 15:45:53</div>
<div class="t" style="top:614.33px;font-size:13.2px;line-height:13.2px;color:#333;left:655px;">Walking Customer</div>
<div class="t" style="top:615.00px;font-size:12.4px;line-height:12.4px;color:#333;left:-49.5px;width:1000px;text-align:right;">100.00</div>
<div class="r" style="left:1018px;top:613px;width:33px;height:18px;border-radius:9px;background:#00a65a;color:#fff;font-size:10px;font-weight:bold;text-align:center;line-height:18px;">Paid</div>
<div class="r" style="left:216px;top:648px;width:905px;height:1px;background:#f4f4f4;"></div>
<div class="r" style="left:226px;top:654px;width:71px;height:26px;background:#00c0ef;border:1px solid #00acd6;"></div>
<svg class="s" style="left:235px;top:661px" width="10" height="10" viewBox="0 0 10 10"><path d="M5 0.5V9.5M0.5 5H9.5" stroke="#fff" stroke-width="2.6"/></svg>
<div class="t" style="top:661.93px;font-size:11.3px;line-height:11.3px;color:#fff;left:249px;">Add Sell</div>
<div class="r" style="left:299px;top:654px;width:79px;height:26px;background:#00a65a;border:1px solid #008d4c;"></div>
<svg class="s" style="left:307px;top:661.5px" width="12" height="11" viewBox="0 0 12 11"><rect x="0" y="0.5" width="2.5" height="2" fill="#fff"/><rect x="3.5" y="0.5" width="8.5" height="2" fill="#fff"/><rect x="0" y="3.3" width="2.5" height="2" fill="#fff"/><rect x="3.5" y="3.3" width="8.5" height="2" fill="#fff"/><rect x="0" y="6.1" width="2.5" height="2" fill="#fff"/><rect x="3.5" y="6.1" width="8.5" height="2" fill="#fff"/><rect x="0" y="8.9" width="2.5" height="2" fill="#fff"/><rect x="3.5" y="8.9" width="8.5" height="2" fill="#fff"/></svg>
<div class="t" style="top:662.00px;font-size:10.4px;line-height:10.4px;color:#fff;left:323.5px;">SELL LIST</div>
<div class="t" style="top:420.58px;font-size:12.9px;line-height:12.9px;color:#333;font-weight:bold;left:1142px;">Sell Amount</div>
<div class="t" style="top:419.80px;font-size:13px;line-height:13px;color:#333;left:584.5999999999999px;width:1000px;text-align:right;">6,300.00</div>
<div class="r" style="left:1142px;top:436px;width:443px;height:10px;background:#00c0ef;"></div>
<div class="t" style="top:470.58px;font-size:12.9px;line-height:12.9px;color:#333;font-weight:bold;left:1142px;">Discount Given</div>
<div class="t" style="top:469.80px;font-size:13px;line-height:13px;color:#333;left:584.5999999999999px;width:1000px;text-align:right;">0.00</div>
<div class="r" style="left:1142px;top:486px;width:443px;height:10px;background:#f5f5f5;"></div>
<div class="t" style="top:520.58px;font-size:12.9px;line-height:12.9px;color:#333;font-weight:bold;left:1142px;">Due Given</div>
<div class="t" style="top:519.80px;font-size:13px;line-height:13px;color:#333;left:584.5999999999999px;width:1000px;text-align:right;">0.00</div>
<div class="r" style="left:1142px;top:536px;width:443px;height:10px;background:#f5f5f5;"></div>
<div class="t" style="top:570.58px;font-size:12.9px;line-height:12.9px;color:#333;font-weight:bold;left:1142px;">Received Amount</div>
<div class="t" style="top:569.80px;font-size:13px;line-height:13px;color:#333;left:584.5999999999999px;width:1000px;text-align:right;">6,300.00</div>
<div class="r" style="left:1142px;top:586px;width:443px;height:10px;background:#00a65a;"></div>
<div class="r" style="left:1142px;top:616px;width:443px;height:26px;background:#f39c12;border:1px solid #e08e0b;"></div>
<div class="t" style="top:624.19px;font-size:11px;line-height:11px;color:#fff;left:863.5px;width:1000px;text-align:center;">Overview Report &#x27F6;</div>
<div class="r" style="left:195px;top:716px;width:1401px;height:200px;background:#fff;border-top:3px solid #12b4e2;box-shadow:0 0 9px rgba(0,0,0,0.13);"></div>
<div class="r" style="left:195px;top:719px;width:1401px;height:87px;background:#9cf9cd;"></div>
<div class="t" style="top:739.58px;font-size:15.5px;line-height:15.5px;color:#333;font-weight:bold;left:47.299999999999955px;width:1000px;text-align:center;">6,300.00</div>
<div class="t" style="top:770.19px;font-size:16.2px;line-height:16.2px;color:#333;letter-spacing:-0.45px;left:47.39999999999998px;width:1000px;text-align:center;">DEPOSIT TODAY</div>
<div class="r" style="left:889px;top:738px;width:1px;height:48px;background:#d9f7e8;"></div>
<div class="t" style="top:739.58px;font-size:15.5px;line-height:15.5px;color:#333;font-weight:bold;left:752px;width:1000px;text-align:center;">0.00</div>
<div class="t" style="top:770.19px;font-size:16.2px;line-height:16.2px;color:#333;letter-spacing:-0.45px;left:752px;width:1000px;text-align:center;">WIDTHDRAW TODAY</div>
<div class="r" style="left:205px;top:812px;width:675px;height:120px;background:#fff;border:1px solid #dcdfe4;"></div>
<div class="t" style="top:823.62px;font-size:16.4px;line-height:16.4px;color:#444;font-weight:bold;left:217px;">Recent Deposit</div>
<div class="r" style="left:206px;top:850px;width:673px;height:1px;background:#f4f4f4;"></div>
<div class="r" style="left:216px;top:861px;width:653px;height:26px;background:#d2d6de;"></div>
<div class="r" style="left:216px;top:887px;width:653px;height:20px;background:#f9f9f9;"></div>
<div class="t" style="top:870.43px;font-size:11.9px;line-height:11.9px;color:#111;font-weight:bold;left:-169.5px;width:1000px;text-align:center;">Date</div>
<div class="t" style="top:870.43px;font-size:11.9px;line-height:11.9px;color:#111;font-weight:bold;left:-14.399999999999977px;width:1000px;text-align:center;">Description</div>
<div class="t" style="top:870.43px;font-size:11.9px;line-height:11.9px;color:#111;font-weight:bold;left:-139px;width:1000px;text-align:right;">Amount</div>
<div class="r" style="left:900px;top:812px;width:685px;height:120px;background:#fff;border:1px solid #dcdfe4;"></div>
<div class="t" style="top:823.62px;font-size:16.4px;line-height:16.4px;color:#444;font-weight:bold;left:912px;">Recent Withdraw</div>
<div class="r" style="left:901px;top:850px;width:683px;height:1px;background:#f4f4f4;"></div>
<div class="r" style="left:911px;top:861px;width:663px;height:26px;background:#d2d6de;"></div>
<div class="r" style="left:911px;top:887px;width:663px;height:20px;background:#f9f9f9;"></div>
<div class="t" style="top:870.43px;font-size:11.9px;line-height:11.9px;color:#111;font-weight:bold;left:527.5999999999999px;width:1000px;text-align:center;">Date</div>
<div class="t" style="top:870.43px;font-size:11.9px;line-height:11.9px;color:#111;font-weight:bold;left:684px;width:1000px;text-align:center;">Description</div>
<div class="t" style="top:870.43px;font-size:11.9px;line-height:11.9px;color:#111;font-weight:bold;left:566.4000000000001px;width:1000px;text-align:right;">Amount</div>
<div class="r" style="left:1595px;top:40px;width:1px;height:456px;background:#6a6a6a;"></div>
<div class="r" style="left:1595px;top:496px;width:1px;height:404px;background:#e6e6e6;"></div>
</body></html>
